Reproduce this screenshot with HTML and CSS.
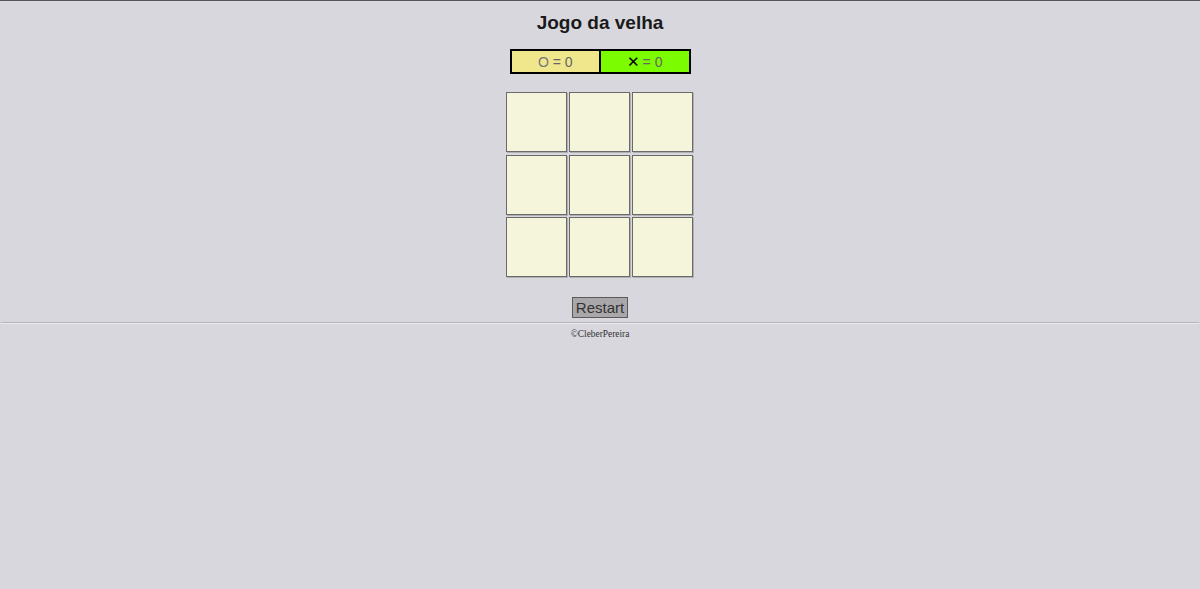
FILE: index.html
```html
<!DOCTYPE html>
<html lang="pt">
<head>
<meta charset="utf-8">
<title>Jogo da velha</title>
<link rel="stylesheet" href="styles.css">
</head>
<body>
<main class="game">
  <h1 class="title">Jogo da velha</h1>
  <div class="score">
    <div class="score-cell score-o"><span class="mark-o">O</span> = 0</div>
    <div class="score-cell score-x"><span class="mark-x">✕</span> = 0</div>
  </div>
  <div class="board">
    <button class="cell"></button>
    <button class="cell"></button>
    <button class="cell"></button>
    <button class="cell"></button>
    <button class="cell"></button>
    <button class="cell"></button>
    <button class="cell"></button>
    <button class="cell"></button>
    <button class="cell"></button>
  </div>
  <button class="restart">Restart</button>
</main>
<hr class="divider">
<footer class="footer">©CleberPereira</footer>
</body>
</html>
```
FILE: styles.css
```css
html {
  background: #d8d7de;
  border-top: 1px solid #555;
}
body {
  margin: 0;
  background: #d8d7de;
  font-family: "Liberation Sans", Arial, sans-serif;
}
.game {
  display: flex;
  flex-direction: column;
  align-items: center;
}
.title {
  margin: 11px 0 0;
  font-size: 19px;
  font-weight: bold;
  color: #1a1a1a;
  line-height: 22px;
}
.score {
  margin-top: 15px;
  display: flex;
  border: 2px solid #000;
  width: 181px;
  box-sizing: border-box;
  height: 25px;
}
.score-cell {
  flex: 1;
  display: flex;
  align-items: center;
  justify-content: center;
  font-family: "Liberation Sans", Arial, sans-serif;
  font-size: 14px;
  color: #666;
}
.score-o {
  background: #f0e68c;
  border-right: 2px solid #000;
}
.score-x {
  background: #7cfc00;
}
.mark-o {
  margin-right: 4px;
  color: #777;
}
.mark-x {
  margin-right: 3px;
  color: #000;
  font-size: 15px;
  font-family: "DejaVu Sans", sans-serif;
}
.board {
  margin-top: 18px;
  margin-right: 1px;
  display: grid;
  grid-template-columns: repeat(3, 60.5px);
  grid-auto-rows: 60px;
  gap: 2.5px;
}
.cell {
  margin: 0;
  padding: 0;
  background: #f5f5dc;
  border: 1px solid #6a6a6a;
  box-shadow: 1px 1px 0 #b0afb3;
}
.restart {
  margin-top: 20px;
  font-family: "Liberation Sans", Arial, sans-serif;
  font-size: 15px;
  color: #333;
  background: #aaa7aa;
  border: 1px solid #5a5a5a;
  padding: 0 3px;
  height: 21px;
  line-height: 19px;
}
.divider {
  margin: 4px 1px 0;
  border: 0;
  border-top: 1px solid #b6b6ba;
  border-bottom: 1px solid #ececef;
  height: 0;
}
.footer {
  text-align: center;
  font-family: "Liberation Serif", "Times New Roman", serif;
  font-size: 9.4px;
  color: #333;
  margin-top: 5px;
}
```
